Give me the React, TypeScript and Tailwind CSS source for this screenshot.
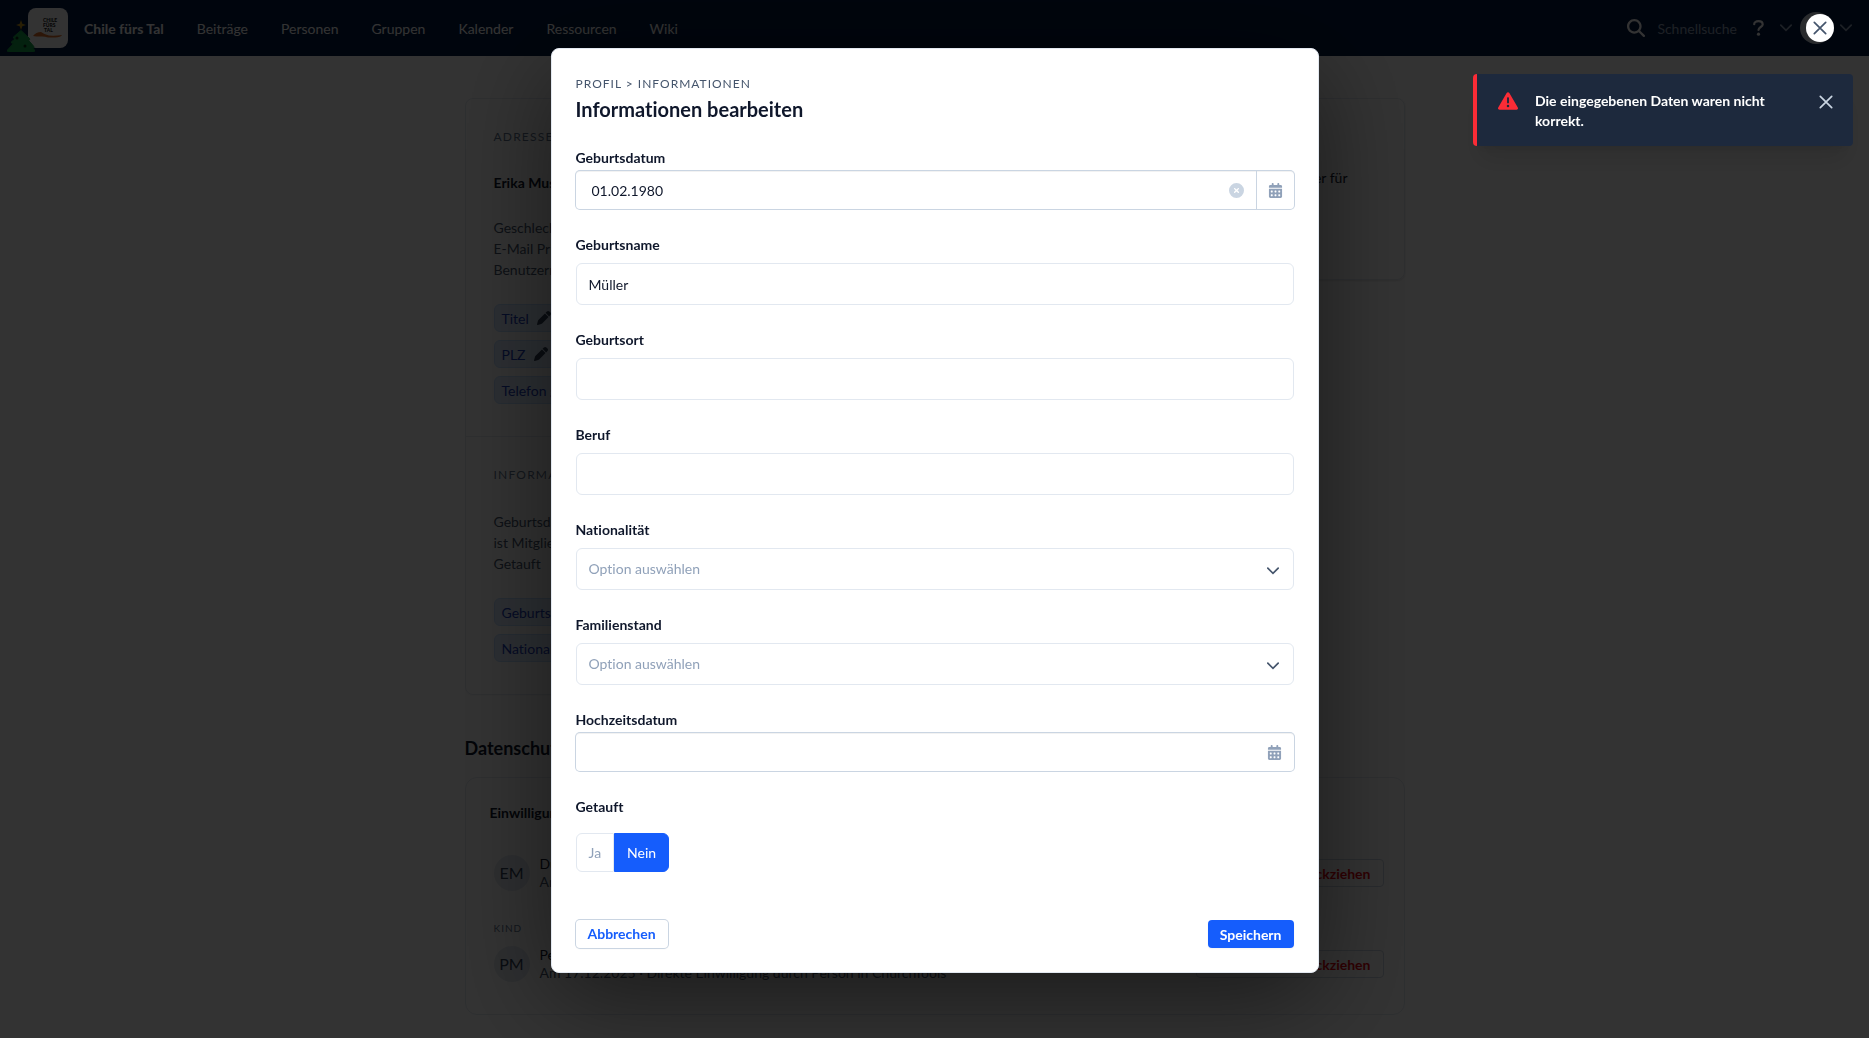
import { useState } from 'react';
import {
	FaCalendarDays,
	FaCircleXmark,
	FaMagnifyingGlass,
	FaPen,
	FaTriangleExclamation,
} from 'react-icons/fa6';

const navItems = ['Beiträge', 'Personen', 'Gruppen', 'Kalender', 'Ressourcen', 'Wiki'];

interface Consent {
	initials: string;
	name: string;
	detail: string;
	heading?: string;
}

const consents: Consent[] = [
	{
		initials: 'EM',
		name: 'Du',
		detail: 'Am 17.12.2025 · Direkte Einwilligung durch Person in ChurchTools',
	},
	{
		initials: 'PM',
		name: 'Peter Muster',
		detail: 'Am 17.12.2025 · Direkte Einwilligung durch Person in ChurchTools',
		heading: 'Kind',
	},
];

// --- Icons ---
const Chevron = ({ className }: { className?: string }) => (
	<svg viewBox="0 0 12 8" className={className} fill="none" stroke="currentColor" aria-hidden="true">
		<path d="M.8 1.200 6 6.400 11.200 1.200" strokeWidth="1.700" strokeLinecap="round" />
	</svg>
);

const Cross = ({ className }: { className?: string }) => (
	<svg viewBox="0 0 14 14" className={className} fill="none" stroke="currentColor" aria-hidden="true">
		<path d="M1.300 1.300 12.700 12.700M12.700 1.300 1.300 12.700" strokeWidth="1.700" strokeLinecap="round" />
	</svg>
);

const Question = ({ className }: { className?: string }) => (
	<svg viewBox="0 0 11 16" className={className} fill="none" stroke="currentColor" aria-hidden="true">
		<path
			d="M1.200 4.200C1.200 2.400 2.800 1.200 5.400 1.200s4.300 1.200 4.300 3.200c0 2.600-4.200 2.700-4.200 5.600"
			strokeWidth="2.200"
			strokeLinecap="round"
		/>
		<circle cx="5.500" cy="14.200" r="1.600" fill="currentColor" stroke="none" />
	</svg>
);

const Tree = () => (
	<svg viewBox="0 0 28 32" className="absolute top-5 left-[7px] h-8 w-7" aria-hidden="true">
		<path
			d="M14 10.500 22.500 18.500q1 1.500-1 1.800l5.200 6q.9 1.700-.7 2l1.500 1.700q.5 2-1.500 2H2q-2 0-1.500-2l6-6.500q-3-.3-2-1.800l4-3q-3-.4-2-1.800z"
			fill="#16a34a"
			stroke="#16a34a"
			strokeLinejoin="round"
		/>
		<path d="m14 0 1.300 3.700L19 5l-3.700 1.300L14 10l-1.300-3.700L9 5l3.700-1.300z" fill="#ca9a1a" />
		<circle cx="10" cy="18" r="1.500" fill="#052e16" />
		<circle cx="18" cy="26" r="1.500" fill="#052e16" />
	</svg>
);

const Logo = () => (
	<svg viewBox="0 0 40 40" className="ml-7 size-10 rounded-lg bg-white" aria-hidden="true">
		<g fill="#222" fontSize="5" fontWeight="900" fontFamily="Lato, sans-serif">
			<text x="15" y="14">CHILE</text>
			<text x="15" y="19">FÜRS</text>
			<text x="16" y="24">TAL</text>
		</g>
		<path d="M5 28q3-4 8-4 3 2 8 3.500 6 .5 13-.5-1 2-7 2.500H20q-4-1.500-8-1-4 0-7-.5z" fill="#e0702a" />
	</svg>
);

// --- Page behind the dialog ---
const NavBar = () => (
	<header className="relative flex h-14 items-center bg-[#031b42] pr-[17px] text-white">
		<Logo />
		<Tree />
		<nav className="ml-4 flex grow items-center gap-[33px]">
			<a href="#home" className="font-bold">
				Chile fürs Tal
			</a>
			{navItems.map((item) => (
				<a key={item} href={`#${item}`}>
					{item}
				</a>
			))}
		</nav>
		<div className="flex items-center">
			<FaMagnifyingGlass className="size-[18px]" />
			<span className="ml-3 text-slate-400">Schnellsuche</span>
			<Question className="ml-4 h-4 w-[11px]" />
			<Chevron className="ml-4 h-2 w-3 text-slate-400" />
			<span className="ml-2 size-8 rounded-full bg-slate-300" />
			<Chevron className="ml-2 h-2 w-3 text-slate-400" />
		</div>
	</header>
);

const MissingTag = ({ label }: { label: string }) => (
	<button
		type="button"
		className="flex h-7 items-center gap-2 rounded-md border border-blue-200 bg-blue-100 px-[7px] text-blue-800"
	>
		{label}
		<FaPen className="size-3.5 text-slate-700" />
	</button>
);

const ProfileSection = ({
	title,
	name,
	rows,
	tags,
}: {
	title: string;
	name?: string;
	rows: string[];
	tags: string[];
}) => (
	<section className="px-7 pt-7 pb-8">
		<h3 className="text-xs leading-5 tracking-widest text-slate-500 uppercase">{title}</h3>
		{name && <p className="mt-[25px] font-bold">{name}</p>}
		<ul className={name ? 'mt-6 text-slate-600' : 'mt-[26px] text-slate-600'}>
			{rows.map((row) => (
				<li key={row}>{row}</li>
			))}
		</ul>
		<div className="mt-6 flex flex-col items-start gap-2">
			{tags.map((tag) => (
				<MissingTag key={tag} label={tag} />
			))}
		</div>
	</section>
);

const ProfilePage = () => (
	<div className="mx-auto mt-[42px] max-w-[940px]">
		<div className="flex items-start gap-6">
			<div className="grow divide-y divide-slate-200 rounded-lg border border-slate-200 shadow-xs">
				<ProfileSection
					title="Adresse und Kontakt"
					name="Erika Muster"
					rows={['Geschlecht', 'E-Mail Privat', 'Benutzername']}
					tags={['Titel', 'PLZ', 'Telefon geschäftlich']}
				/>
				<ProfileSection
					title="Informationen"
					rows={['Geburtsdatum', 'ist Mitglied', 'Getauft']}
					tags={['Geburtsort', 'Nationalität']}
				/>
			</div>
			<aside className="h-[182px] w-[300px] rounded-lg border border-slate-200 px-6 pt-[68px] text-right shadow-sm">
				<p className="pr-8">Noch keine Bilder für</p>
			</aside>
		</div>
		<h2 className="mt-[39px] text-lg font-bold">Datenschutz</h2>
		<div className="mt-[15px] rounded-xl border border-slate-200 px-6 pt-6 pb-8">
			<h3 className="font-bold">Einwilligungen</h3>
			{consents.map(({ initials, name, detail, heading }) => (
				<div key={initials}>
					{heading && (
						<h4 className="mt-[27px] ml-1 text-[10px] leading-5 tracking-widest text-slate-500 uppercase">
							{heading}
						</h4>
					)}
					<div className={heading ? 'mt-2 ml-1 flex items-center' : 'mt-8 ml-1 flex items-center'}>
						<span className="flex size-9 items-center justify-center rounded-full bg-slate-200 text-base text-slate-700">
							{initials}
						</span>
						<div className="ml-2.5 grow leading-[18px]">
							<p>{name}</p>
							<p className="text-slate-600">{detail}</p>
						</div>
						<button
							type="button"
							className="-mr-1 h-7 rounded-sm border border-slate-300 px-3 font-bold text-red-600"
						>
							Einwilligung zurückziehen
						</button>
					</div>
				</div>
			))}
		</div>
	</div>
);

// --- Form fields ---
const labelClass = 'text-sm leading-5 font-bold text-slate-900';

const TextField = ({ id, label, value = '' }: { id: string; label: string; value?: string }) => (
	<div className="flex flex-col gap-2">
		<label htmlFor={id} className={labelClass}>
			{label}
		</label>
		<input
			id={id}
			type="text"
			defaultValue={value}
			className="h-[42px] rounded-md border border-slate-200 bg-white px-3 text-slate-900 outline-none"
		/>
	</div>
);

const SelectField = ({ id, label }: { id: string; label: string }) => (
	<div className="flex flex-col gap-2">
		<label htmlFor={id} className={labelClass}>
			{label}
		</label>
		<div className="grid items-center">
			<select
				id={id}
				className="col-start-1 row-start-1 h-[42px] appearance-none rounded-md border border-slate-200 bg-white px-3 pb-0.5 text-slate-400 outline-none"
			>
				<option>Option auswählen</option>
			</select>
			<Chevron className="pointer-events-none col-start-1 row-start-1 mt-1 mr-[15px] h-2 w-3 justify-self-end text-slate-600" />
		</div>
	</div>
);

const DateField = ({ id, label, initial = '' }: { id: string; label: string; initial?: string }) => {
	const [value, setValue] = useState(initial);
	return (
		<div className="flex flex-col gap-[3px] pb-px">
			<label htmlFor={id} className={labelClass}>
				{label}
			</label>
			<div className="flex h-[38px] items-stretch rounded-sm bg-white inset-shadow-2xs ring ring-slate-300">
				<input
					id={id}
					type="text"
					value={value}
					onChange={(e) => setValue(e.target.value)}
					className="min-w-0 grow bg-transparent px-4 text-slate-900 outline-none"
				/>
				{value && (
					<button
						type="button"
						aria-label="Datum löschen"
						onClick={() => setValue('')}
						className="px-3 text-slate-300"
					>
						<FaCircleXmark className="size-[15px]" />
					</button>
				)}
				<button
					type="button"
					aria-label="Kalender öffnen"
					className={
						value
							? 'flex w-[38px] items-center justify-center border-l border-slate-300 text-slate-400'
							: 'flex w-[38px] items-center justify-center text-slate-400'
					}
				>
					<FaCalendarDays className="size-[15px]" />
				</button>
			</div>
		</div>
	);
};

const BaptizedField = () => {
	const [baptized, setBaptized] = useState(false);
	const active = 'border-[#155dfc] bg-[#155dfc] text-white';
	const inactive = 'border-slate-200 text-slate-400';
	return (
		<fieldset>
			<legend className={labelClass}>Getauft</legend>
			<div className="mt-4 flex h-[39px]">
				<button
					type="button"
					aria-pressed={baptized}
					onClick={() => setBaptized(true)}
					className={`rounded-l-md border px-3 ${baptized ? active : inactive}`}
				>
					Ja
				</button>
				<button
					type="button"
					aria-pressed={!baptized}
					onClick={() => setBaptized(false)}
					className={`rounded-r-md border px-3 ${baptized ? inactive : active}`}
				>
					Nein
				</button>
			</div>
		</fieldset>
	);
};

// --- Dialog ---
const EditDialog = () => (
	<form
		role="dialog"
		aria-labelledby="dialog-title"
		onSubmit={(e) => e.preventDefault()}
		className="w-full max-w-3xl rounded-lg border border-slate-200 bg-white p-6 text-slate-900 shadow-[0_24px_100px_rgba(0,0,0,0.5)]"
	>
		<p className="text-xs leading-[21px] tracking-[1px] text-slate-600 uppercase">
			Profil &gt; Informationen
		</p>
		<h1 id="dialog-title" className="text-xl leading-[30px] font-bold">
			Informationen bearbeiten
		</h1>
		<div className="mt-6 flex flex-col gap-[25px]">
			<DateField id="birthday" label="Geburtsdatum" initial="01.02.1980" />
			<TextField id="birthname" label="Geburtsname" value="Müller" />
			<TextField id="birthplace" label="Geburtsort" />
			<TextField id="job" label="Beruf" />
			<SelectField id="nationality" label="Nationalität" />
			<SelectField id="family-status" label="Familienstand" />
			<DateField id="wedding" label="Hochzeitsdatum" />
			<BaptizedField />
		</div>
		<div className="mt-12 flex justify-between">
			<button
				type="button"
				className="h-7 rounded-sm bg-white px-3 pb-px font-bold text-[#155dfc] shadow-xs ring ring-slate-300"
			>
				Abbrechen
			</button>
			<button type="submit" className="h-7 rounded-sm bg-[#155dfc] px-3 font-bold text-white shadow-xs">
				Speichern
			</button>
		</div>
	</form>
);

const Toast = () => (
	<div
		role="alert"
		className="fixed top-[74px] right-4 flex w-[380px] items-start rounded-sm border-l-4 border-[#fb2c36] bg-slate-800 pt-[17px] pr-5 pb-[15px] pl-[21px] shadow-xl"
	>
		<FaTriangleExclamation className="size-5 shrink-0 text-[#fb2c36]" />
		<p className="ml-[17px] w-60 leading-5 font-bold text-white">
			Die eingegebenen Daten waren nicht korrekt.
		</p>
		<button type="button" aria-label="Meldung schließen" className="mt-1 ml-auto text-slate-300">
			<Cross className="size-3.5" />
		</button>
	</div>
);

const App = () => (
	<div className="min-h-screen bg-white font-[Lato,sans-serif] text-sm leading-[21px] text-slate-900 [font-variant-ligatures:none]">
		<div className="h-screen overflow-hidden">
			<NavBar />
			<ProfilePage />
		</div>
		<div className="fixed inset-0 flex items-start justify-center overflow-hidden bg-black/80 pt-12">
			<EditDialog />
			<button
				type="button"
				aria-label="Schließen"
				className="absolute top-3.5 right-[35px] flex size-7 items-center justify-center rounded-full bg-white text-slate-600"
			>
				<Cross className="size-3.5" />
			</button>
		</div>
		<Toast />
	</div>
);

export default App;
